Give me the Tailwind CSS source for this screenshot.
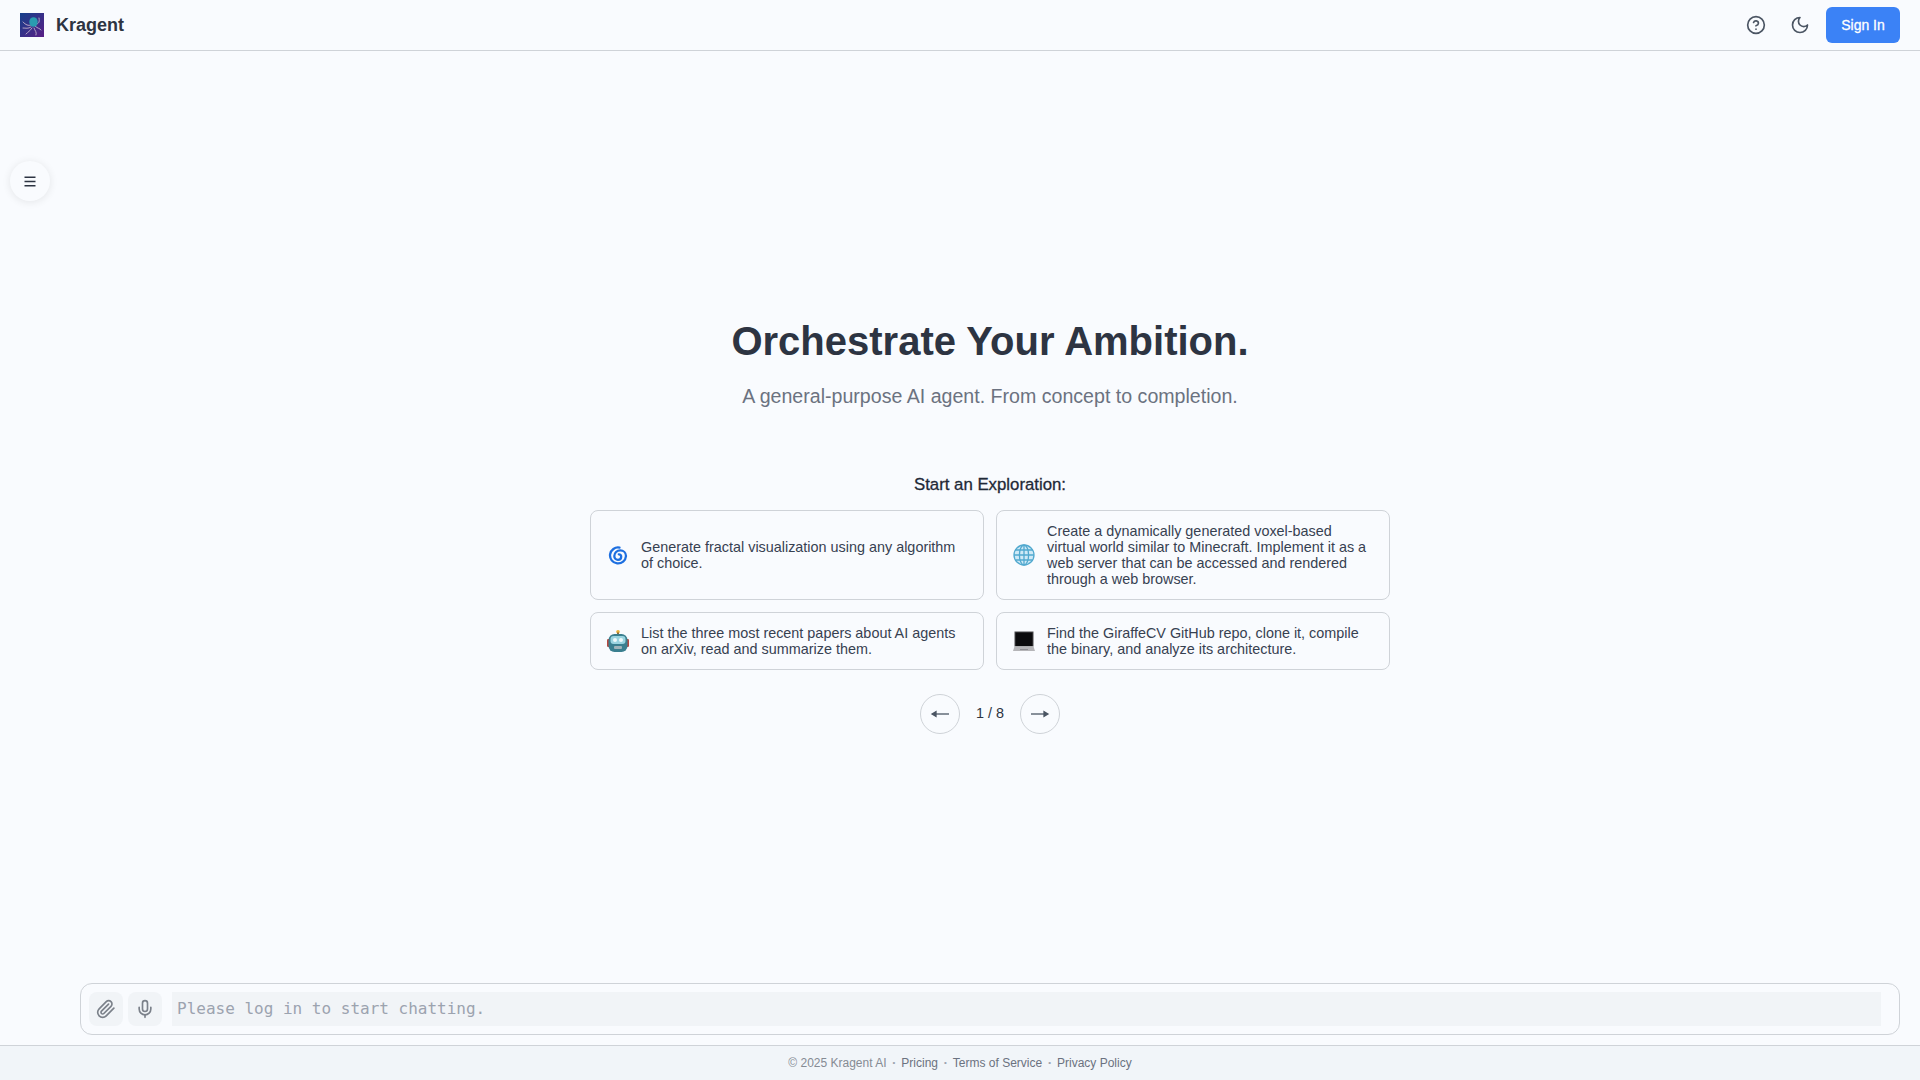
<!doctype html>
<html lang="en">
<head>
<meta charset="utf-8">
<title>Kragent</title>
<script src="https://cdn.jsdelivr.net/npm/@tailwindcss/browser@4"></script>
</head>
<body class="bg-[#f9fbfe] font-['Liberation_Sans',Arial,sans-serif] text-[#1f2937]">
<div class="relative flex h-[1080px] w-[1920px] flex-col overflow-hidden">
  <header class="flex h-[51px] shrink-0 items-center justify-between border-b border-[#cfd3d8] pl-5 pr-5">
    <div class="flex items-center gap-3">
      <svg class="h-6 w-6" viewBox="0 0 24 24">
        <defs><linearGradient id="lg" x1="0" y1="0" x2="1" y2="1"><stop offset="0" stop-color="#14408a"/><stop offset="1" stop-color="#5a1f86"/></linearGradient></defs>
        <rect width="24" height="24" fill="url(#lg)"/>
        <g fill="none" stroke="#b4a6c4" stroke-width="1" stroke-linecap="round">
          <path d="M11 12C8 13 6 12 3 9"/><path d="M11 14C8 16 6 15 3 15"/><path d="M12 15C10 18 8 19 6 21"/><path d="M14 15C15 18 17 19 16 22"/><path d="M15 13C18 16 20 15 21 17"/><path d="M16 11C18 11 20 10 19 5"/>
        </g>
        <ellipse cx="13.5" cy="9" rx="4.2" ry="4.8" fill="#2a9db0"/>
      </svg>
      <span class="text-lg font-bold text-[#2d3442]">Kragent</span>
    </div>
    <div class="flex items-center">
      <svg class="h-5 w-5 text-[#4b5563]" viewBox="0 0 24 24" fill="none" stroke="currentColor" stroke-width="2" stroke-linecap="round" stroke-linejoin="round"><circle cx="12" cy="12" r="10"/><path d="M9.09 9a3 3 0 0 1 5.83 1c0 2-3 3-3 3"/><path d="M12 17h.01"/></svg>
      <svg class="ml-6 h-5 w-5 text-[#4b5563]" viewBox="0 0 24 24" fill="none" stroke="currentColor" stroke-width="2" stroke-linecap="round" stroke-linejoin="round"><path d="M12 3a6 6 0 0 0 9 9 9 9 0 1 1-9-9Z"/></svg>
      <button class="ml-4 h-9 w-[74px] rounded-md bg-[#3b82f6] text-sm font-medium text-white [-webkit-text-stroke:0.3px_white]">Sign In</button>
    </div>
  </header>

  <button class="absolute left-[10px] top-[161px] flex h-10 w-10 items-center justify-center rounded-full bg-[#f9fbfe] shadow-[0_1px_8px_rgba(0,0,0,0.09)]">
    <svg class="h-[14px] w-[14px] text-[#2d3442]" viewBox="0 0 14 14" fill="none" stroke="currentColor" stroke-width="1.6"><path d="M1.5 3.3h11M1.5 7.5h11M1.5 11.7h11"/></svg>
  </button>

  <main class="flex flex-1 flex-col pl-[80px] pr-5">
    <div class="flex flex-1 flex-col items-center pt-[264px]">
      <h1 class="text-[40px] leading-[52px] font-bold text-[#2d3442]">Orchestrate Your Ambition.</h1>
      <p class="mt-[15px] text-[19.6px] leading-7 text-[#6b7280]">A general-purpose AI agent. From concept to completion.</p>
      <h2 class="mt-[63px] text-[16.8px] leading-6 font-normal text-[#1f2937] [-webkit-text-stroke:0.3px_#1f2937]">Start an Exploration:</h2>
      <div class="mt-[13px] grid w-[800px] grid-cols-2 gap-3 text-[14.4px] leading-4 text-[#374151]">
        <div class="flex h-[90px] items-center gap-3 rounded-lg border border-[#cfd3d8] pl-[17px] pr-5">
          <svg class="h-5 w-5 shrink-0 translate-y-px" viewBox="0 0 20 20" fill="none" stroke="#1d6fe0" stroke-width="2.3" stroke-linecap="round"><path d="M11.5 1.6A8 8 0 1 0 18 10c0-3.2-2.6-5.6-5.8-5.6S6.3 6.8 6.3 10.1c0 2.1 1.6 3.7 3.6 3.7s3.3-1.4 3.3-3.1c0-1.4-1-2.4-2.4-2.4"/></svg>
          <p class="ml-px">Generate fractal visualization using any algorithm of choice.</p>
        </div>
        <div class="flex h-[90px] items-center gap-3 rounded-lg border border-[#cfd3d8] pl-[16px] pr-5">
          <svg class="h-[22px] w-[22px] shrink-0" viewBox="0 0 22 22" fill="#cfe9f6" stroke="#52a9cf" stroke-width="1.3"><circle cx="11" cy="11" r="10"/><ellipse cx="11" cy="11" rx="4.6" ry="10"/><path d="M11 1v20M1 11h20M2.4 6h17.2M2.4 16h17.2" fill="none"/></svg>
          <p>Create a dynamically generated voxel-based virtual world similar to Minecraft. Implement it as a web server that can be accessed and rendered through a web browser.</p>
        </div>
        <div class="flex h-[58px] items-center gap-3 rounded-lg border border-[#cfd3d8] pl-[16px] pr-5">
          <svg class="h-[22px] w-[22px] shrink-0" viewBox="0 0 22 22">
            <circle cx="11" cy="1.8" r="1.8" fill="#e8b13a"/><rect x="10" y="2.5" width="2" height="2" fill="#8a6d3b"/>
            <rect x="0" y="9" width="3" height="8" rx="1.2" fill="#b5483f"/><rect x="19" y="9" width="3" height="8" rx="1.2" fill="#b5483f"/>
            <rect x="1.5" y="4" width="19" height="18" rx="6" fill="#3a7f8f"/><rect x="3.5" y="6" width="15" height="8" rx="3" fill="#9ad4e0"/>
            <circle cx="8" cy="10" r="2" fill="#eef9fb"/><circle cx="14" cy="10" r="2" fill="#eef9fb"/>
            <rect x="7" y="16" width="8" height="3" rx="1" fill="#9fb4ba"/>
          </svg>
          <p>List the three most recent papers about AI agents on arXiv, read and summarize them.</p>
        </div>
        <div class="flex h-[58px] items-center gap-3 rounded-lg border border-[#cfd3d8] pl-[16px] pr-5">
          <svg class="h-[22px] w-[22px] shrink-0" viewBox="0 0 22 22">
            <rect x="1.5" y="1.5" width="19" height="15" fill="#4a4a4c"/><rect x="2.5" y="2.5" width="17" height="13.5" fill="#0b0b0d"/>
            <path d="M1.5 16.5h19L22 21H0Z" fill="#b5b5b8"/><rect x="7" y="19" width="8" height="1" fill="#8e8e92"/>
          </svg>
          <p>Find the GiraffeCV GitHub repo, clone it, compile the binary, and analyze its architecture.</p>
        </div>
      </div>
      <div class="mt-[24px] flex items-center text-[14.4px] text-[#2d3442]">
        <button class="flex h-10 w-10 items-center justify-center rounded-full border border-[#cfd3d8]">
          <svg class="h-[20px] w-[20px] text-[#4b5563]" viewBox="0 0 20 20" fill="none" stroke="currentColor" stroke-width="1.3"><path d="M19 10H3"/><path d="M2 10l4-2.4v4.8Z" fill="currentColor"/></svg>
        </button>
        <span class="w-[60px] text-center">1 / 8</span>
        <button class="flex h-10 w-10 items-center justify-center rounded-full border border-[#cfd3d8]">
          <svg class="h-[20px] w-[20px] text-[#4b5563]" viewBox="0 0 20 20" fill="none" stroke="currentColor" stroke-width="1.3"><path d="M1 10h16"/><path d="M18 10l-4-2.4v4.8Z" fill="currentColor"/></svg>
        </button>
      </div>
    </div>
    <div class="mb-[10px] flex h-[52px] items-center gap-[5px] rounded-xl border border-[#cfd3d8] pl-2 pr-[18px]">
      <span class="flex h-[34px] w-[34px] items-center justify-center rounded-lg bg-[#f1f4f7]">
        <svg class="h-5 w-5 text-[#7b818a]" viewBox="0 0 24 24" fill="none" stroke="currentColor" stroke-width="2" stroke-linecap="round" stroke-linejoin="round"><path d="m21.44 11.05-9.19 9.19a6 6 0 0 1-8.49-8.49l8.57-8.57A4 4 0 1 1 18 8.84l-8.59 8.57a2 2 0 0 1-2.83-2.83l8.49-8.48"/></svg>
      </span>
      <span class="flex h-[34px] w-[34px] items-center justify-center rounded-lg bg-[#f1f4f7]">
        <svg class="h-5 w-5 text-[#7b818a]" viewBox="0 0 24 24" fill="none" stroke="currentColor" stroke-width="2" stroke-linecap="round" stroke-linejoin="round"><path d="M12 2a3 3 0 0 0-3 3v7a3 3 0 0 0 6 0V5a3 3 0 0 0-3-3Z"/><path d="M19 10v2a7 7 0 0 1-14 0v-2"/><path d="M12 19v3"/></svg>
      </span>
      <div class="ml-[5px] flex h-[34px] flex-1 items-center bg-[#f1f4f7] pl-[5px] font-['DejaVu_Sans_Mono',monospace] text-base text-[#9ca3af]">Please log in to start chatting.</div>
    </div>
  </main>

  <footer class="flex h-[35px] shrink-0 items-center justify-center border-t border-[#cfd3d8] bg-[#f1f5f9] text-xs text-[#6b7280]">
    <span class="text-[#858b94]">© 2025 Kragent AI</span>
    <span class="mx-[6px] text-[8px] text-[#9ca3af]">•</span>
    <span>Pricing</span>
    <span class="mx-[6px] text-[8px] text-[#9ca3af]">•</span>
    <span>Terms of Service</span>
    <span class="mx-[6px] text-[8px] text-[#9ca3af]">•</span>
    <span>Privacy Policy</span>
  </footer>
</div>
</body>
</html>
